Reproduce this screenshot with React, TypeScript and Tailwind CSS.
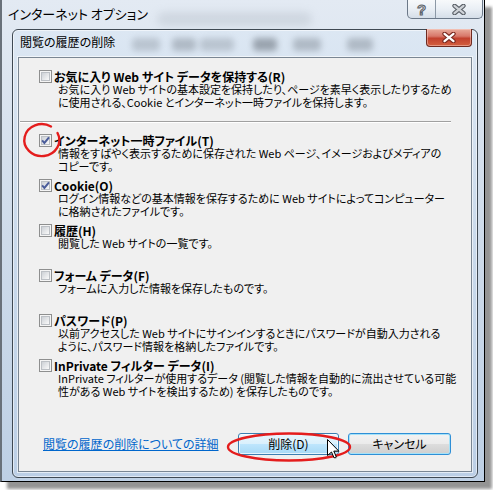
import React from "react";

function Checkbox({ checked }: { checked?: boolean }) {
  return (
    <div className="relative h-[13px] w-[13px] shrink-0 border border-[#8e8f8f] bg-[#f5f5f5] p-[1px]">
      <div className="h-full w-full border border-[#bcc0c5] bg-gradient-to-br from-[#cdd1d6] to-[#fafafa]" />
      {checked && (
        <svg className="absolute left-0 top-0" width="11" height="11" viewBox="0 0 11 11">
          <path d="M2.1 5.4 L4.4 7.9 L9 2.4" fill="none" stroke="#4a5c9a" strokeWidth="2" />
        </svg>
      )}
    </div>
  );
}

function XGlyph({ fill, stroke }: { fill: string; stroke: string }) {
  return (
    <svg width="14" height="11" viewBox="0 0 14 11">
      <path d="M2.5 1.8 L11.5 9.2 M11.5 1.8 L2.5 9.2" stroke={stroke} strokeWidth="4.4" strokeLinecap="round" fill="none" />
      <path d="M2.5 1.8 L11.5 9.2 M11.5 1.8 L2.5 9.2" stroke={fill} strokeWidth="2.2" strokeLinecap="round" fill="none" />
    </svg>
  );
}

type ItemData = { label: string; checked?: boolean; lines: string[] };

function Item({ data, fixed }: { data: ItemData; fixed?: boolean }) {
  return (
    <div className={fixed ? "ml-[20px] h-[45px] shrink-0" : "ml-[20px] shrink-0"}>
      <div className="flex h-[13px] items-center gap-[2px]">
        <Checkbox checked={data.checked} />
        <span className="whitespace-nowrap text-[12px] font-bold leading-[13px]">{data.label}</span>
      </div>
      <div className="ml-[19px] text-[11px] leading-[13px]">
        {data.lines.map((l, i) => (
          <div key={i} className="whitespace-nowrap">
            {l}
          </div>
        ))}
      </div>
    </div>
  );
}

const first: ItemData = {
  label: "お気に入り Web サイト データを保持する(R)",
  lines: [
    "お気に入り Web サイトの基本設定を保持したり、ページを素早く表示したりするため",
    "に使用される、Cookie とインターネット一時ファイルを保持します。",
  ],
};

const rest: ItemData[] = [
  {
    label: "インターネット一時ファイル(T)",
    checked: true,
    lines: ["情報をすばやく表示するために保存された Web ページ、イメージおよびメディアの", "コピーです。"],
  },
  {
    label: "Cookie(O)",
    checked: true,
    lines: ["ログイン情報などの基本情報を保存するために Web サイトによってコンピューター", "に格納されたファイルです。"],
  },
  { label: "履歴(H)", lines: ["閲覧した Web サイトの一覧です。"] },
  { label: "フォーム データ(F)", lines: ["フォームに入力した情報を保存したものです。"] },
  {
    label: "パスワード(P)",
    lines: ["以前アクセスした Web サイトにサインインするときにパスワードが自動入力される", "ように、パスワード情報を格納したファイルです。"],
  },
  {
    label: "InPrivate フィルター データ(I)",
    lines: ["InPrivate フィルターが使用するデータ (閲覧した情報を自動的に流出させている可能", "性がある Web サイトを検出するため) を保存したものです。"],
  },
];

const blobs = [
  { l: "left-[119px]", w: "w-[28px]", o: "opacity-30" },
  { l: "left-[159px]", w: "w-[24px]", o: "opacity-40" },
  { l: "left-[187px]", w: "w-[34px]", o: "opacity-30" },
  { l: "left-[240px]", w: "w-[24px]", o: "opacity-60" },
  { l: "left-[280px]", w: "w-[28px]", o: "opacity-40" },
  { l: "left-[334px]", w: "w-[26px]", o: "opacity-40" },
];

export default function App() {
  return (
    <div className="relative h-[490px] w-[493px] overflow-hidden bg-white font-['Noto_Sans_CJK_JP',sans-serif] text-black [font-feature-settings:'palt']">
      {/* outer window: インターネット オプション */}
      <div className="relative flex h-[482px] w-[485px] flex-col border-b border-l-2 border-r border-b-black border-l-[#69717a] border-r-black bg-gradient-to-b from-[#e3eaf3] via-[#cedbea] to-[#bed0e5] shadow-[7px_7px_3px_rgba(0,0,0,0.42)]">
        <div className="relative flex h-[29px] shrink-0 items-start justify-between">
          <div className="absolute left-[155px] top-[12px] h-[14px] w-[155px] rounded-full bg-[#98a1ab] opacity-25 blur-[4px]" />
          <span className="relative whitespace-nowrap pl-[6px] pt-[6px] text-[13px] leading-[16px]">インターネット オプション</span>
          <div className="relative mr-[1px] flex h-[19px] overflow-hidden rounded-b-[5px] border border-t-0 border-[#6b7888] bg-gradient-to-b from-[#f7f9fb] via-[#eaeff5] to-[#d5dee8]">
            <div className="flex w-[28px] items-center justify-center border-r border-[#8c98a5]">
              <span className="font-['Liberation_Sans',sans-serif] text-[15px] font-bold leading-[15px] text-[#d4d7db] [-webkit-text-stroke:1px_#5b6168]">?</span>
            </div>
            <div className="flex w-[46px] items-center justify-center">
              <XGlyph fill="#cfd3d8" stroke="#5a6068" />
            </div>
          </div>
        </div>

        {/* dialog: 閲覧の履歴の削除 */}
        <div className="relative ml-[10px] flex h-[449px] w-[466px] flex-col rounded-[6px] border border-[#3f4953] bg-gradient-to-b from-[#dce7f3] via-[#c9d9eb] to-[#bccfe6] shadow-[inset_0_0_0_1px_rgba(255,255,255,0.55)]">
          <div className="relative flex h-[27px] shrink-0 items-start justify-between">
            {blobs.map((b, i) => (
              <div key={i} className={`absolute top-[8px] h-[13px] rounded-[4px] bg-[#6f7882] blur-[3px] ${b.l} ${b.w} ${b.o}`} />
            ))}
            <span className="relative whitespace-nowrap pl-[7px] pt-[5px] text-[12px] leading-[14px]">閲覧の履歴の削除</span>
            <div className="relative -mt-[1px] mr-[5px] flex h-[18px] w-[46px] items-center justify-center rounded-b-[4px] border border-t-0 border-[#6e2a20] bg-[linear-gradient(to_bottom,#e9ab9b_0%,#d8786a_42%,#c2412e_55%,#d3603f_100%)] shadow-[inset_0_0_0_1px_rgba(255,220,210,0.45)]">
              <XGlyph fill="#ffffff" stroke="#7a2a20" />
            </div>
          </div>

          <div className="ml-[5px] flex h-[415px] w-[454px] flex-col border border-[#7a8693] bg-[#f0f0f0] pt-[12px] shadow-[0_0_0_1px_rgba(255,255,255,0.6)]">
            <Item data={first} />
            <div className="ml-[1px] mt-[12px] h-[2px] w-[431px] shrink-0 border-b border-t border-b-white border-t-[#a0a0a0]" />
            <div className="mt-[11px] flex flex-col">
              {rest.map((d, i) => (
                <Item key={i} data={d} fixed />
              ))}
            </div>
            <div className="mt-[29px] flex h-[22px] shrink-0 items-center">
              <span className="ml-[24px] whitespace-nowrap text-[12px] leading-[14px] text-[#0066cc] underline">閲覧の履歴の削除についての詳細</span>
              <div className="ml-auto mr-[20px] flex gap-[9px]">
                <div className="flex h-[22px] w-[101px] items-center justify-center rounded-[3px] border border-[#3c7fb1] bg-[linear-gradient(to_bottom,#eaf6fd_0%,#d9f0fc_50%,#bee6fd_50%,#a7d9f5_100%)] text-[12px] leading-[14px] shadow-[inset_0_0_0_1px_rgba(255,255,255,0.7)]">
                  削除(D)
                </div>
                <div className="flex h-[22px] w-[103px] items-center justify-center rounded-[3px] border border-[#2f8fd6] bg-[linear-gradient(to_bottom,#f2f2f2_0%,#ebebeb_50%,#dddddd_50%,#cfcfcf_100%)] text-[12px] leading-[14px] shadow-[inset_0_0_0_1px_#a6e2f8]">
                  キャンセル
                </div>
              </div>
            </div>
          </div>
        </div>
      </div>

      {/* annotations: red marks and mouse cursor */}
      <svg className="pointer-events-none absolute left-0 top-0" width="493" height="490" viewBox="0 0 493 490">
        <path d="M57.5 133 A17.5 16 0 1 1 51 126.5" fill="none" stroke="#e41d1d" strokeWidth="2.4" strokeLinecap="round" />
        <ellipse cx="289" cy="447" rx="61" ry="13.5" fill="none" stroke="#e41d1d" strokeWidth="2.4" />
        <g transform="translate(327.5 439.5)">
          <path d="M1 1 L1 17 L5 13.5 L7.6 19.4 L9.8 18.4 L7.3 12.6 L12.3 12.6 Z" fill="rgba(0,0,0,0.25)" />
          <path d="M0 0 L0 16 L4 12.5 L6.6 18.4 L8.8 17.4 L6.3 11.6 L11.3 11.6 Z" fill="#ffffff" stroke="#000000" strokeWidth="1" strokeLinejoin="miter" />
        </g>
      </svg>
    </div>
  );
}
